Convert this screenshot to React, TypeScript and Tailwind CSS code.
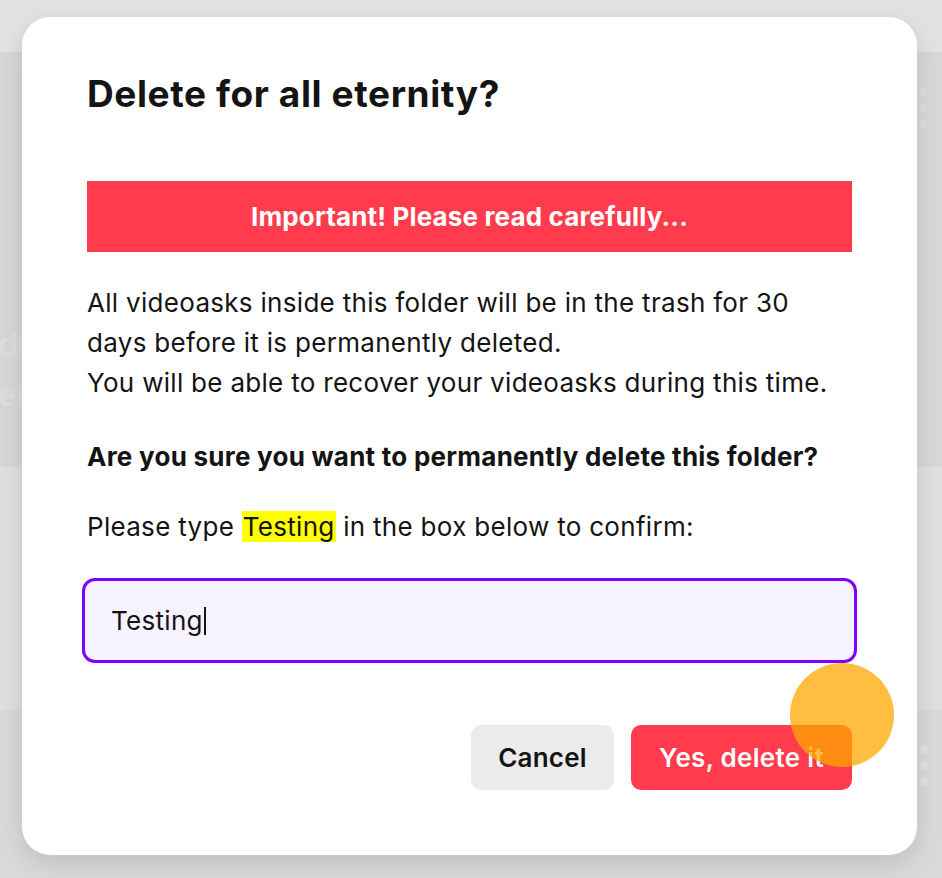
export default function App() {
  return (
    <div className="relative h-[878px] w-[942px] overflow-hidden bg-[#d8d9db]" style={{ fontFamily: "Inter, 'Noto Sans', sans-serif" }}>
      {/* dimmed page behind the dialog */}
      <div className="flex flex-col">
        <div className="h-[52px] bg-[#e2e2e2]" />
        <div className="flex h-[415px] bg-[#d7d7d7]">
          <div className="flex w-[40px] flex-col pt-[268px] text-[32px] font-semibold leading-[50px] text-[#dddddd]">
            <span className="-ml-[2px]">do</span>
            <span className="-ml-[2px]">ed</span>
          </div>
          <div className="flex-1" />
          <div className="flex w-[30px] flex-col gap-[8px] pl-[7px] pt-[36px]">
            <span className="h-[8px] w-[8px] rounded-full bg-[#dedede]" />
            <span className="h-[8px] w-[8px] rounded-full bg-[#dedede]" />
            <span className="h-[8px] w-[8px] rounded-full bg-[#dedede]" />
          </div>
        </div>
        <div className="h-[243px] bg-[#dfdfdf]" />
        <div className="flex h-[168px] bg-[#d8d9db]">
          <div className="flex-1" />
          <div className="flex w-[30px] flex-col gap-[8px] pl-[8px] pt-[36px]">
            <span className="h-[8px] w-[8px] rounded-full bg-[#e0e1e3]" />
            <span className="h-[8px] w-[8px] rounded-full bg-[#e0e1e3]" />
            <span className="h-[8px] w-[8px] rounded-full bg-[#e0e1e3]" />
          </div>
        </div>
      </div>

      {/* dialog */}
      <div className="absolute inset-0 flex justify-start pl-[22px] pt-[17px]">
        <div className="flex h-[838px] w-[895px] flex-col rounded-[28px] bg-white px-[65px] pt-[56px] text-[#141414] shadow-[0_8px_24px_rgba(0,0,0,0.12)]">
          <h1 className="text-[37px] font-bold leading-[42px] tracking-[0.6px]">Delete for all eternity?</h1>

          <div className="mt-[66px] flex h-[71px] items-center justify-center bg-[#ff3b4d] text-[26px] font-bold tracking-[0.15px] text-white">
            Important! Please read carefully...
          </div>

          <p className="mt-[31px] text-[26px] leading-[40px] tracking-[0.3px]">
            All videoasks inside this folder will be in the trash for 30
            <br />
            days before it is permanently deleted.
            <br />
            You will be able to recover your videoasks during this time.
          </p>

          <p className="mt-[34px] text-[26px] font-bold leading-[40px] tracking-[0.25px]">
            Are you sure you want to permanently delete this folder?
          </p>

          <p className="mt-[30px] text-[26px] leading-[40px] tracking-[0.3px]">
            Please type <span className="bg-[#ffff00] px-[1px]">Testing</span> in the box below to confirm:
          </p>

          <div className="-mx-[5px] mt-[31px] flex h-[85px] items-center rounded-[13px] border-[3px] border-[#7f00ff] bg-[#f7f2ff] px-[26px] text-[26px] tracking-[0.3px]">
            <span>Testing</span>
            <span className="ml-[1px] h-[28px] w-[2px] bg-[#141414]" />
          </div>

          <div className="mt-[62px] flex justify-end gap-[17px]">
            <button className="h-[65px] w-[143px] rounded-[10px] bg-[#ebebeb] text-[26px] font-semibold tracking-[0.2px] text-[#141414]">
              Cancel
            </button>
            <button className="h-[65px] w-[221px] rounded-[10px] bg-[#ff3b4d] text-[26px] font-semibold tracking-[0.3px] text-white">
              Yes, delete it
            </button>
          </div>
        </div>
      </div>

      {/* touch indicator */}
      <div className="absolute left-[790px] top-[663px] h-[104px] w-[104px] rounded-full bg-[#ffa800]/75" />
    </div>
  );
}
